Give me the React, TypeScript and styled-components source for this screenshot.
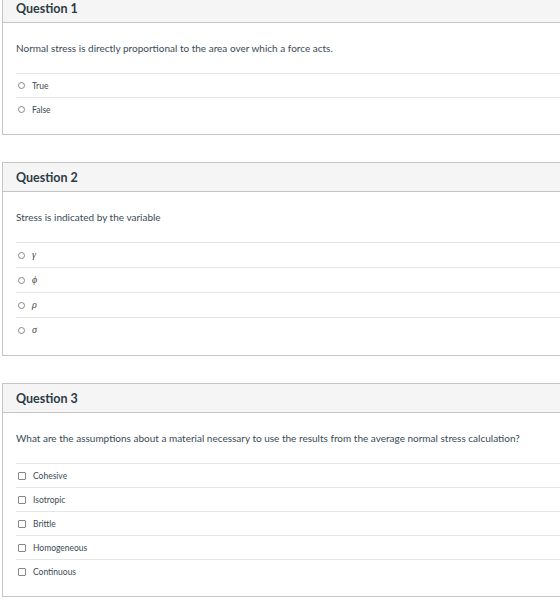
import styled, { createGlobalStyle } from "styled-components";

const GlobalStyle = createGlobalStyle`
  html, body {
    margin: 0;
    padding: 0;
    background: #ffffff;
    overflow: hidden;
  }
  body {
    font-family: Lato, "Noto Sans", sans-serif;
    color: #2d3b45;
  }
`;

const Page = styled.div`
  display: flex;
  flex-direction: column;
  gap: 27px;
  width: 620px;
  margin: -7px 0 0 2px;
`;

const Card = styled.section`
  border: 1px solid #c4c4c4;
  background: #ffffff;
`;

const Header = styled.header`
  height: 28px;
  display: flex;
  align-items: center;
  padding: 0 13px;
  background: #f5f5f5;
  border-bottom: 1px solid #c4c4c4;
  font-size: 12.5px;
  font-weight: 700;
  color: #2d3b45;
`;

const Body = styled.div`
  padding: 0 0 13px 13px;
`;

const Prompt = styled.p`
  margin: 0;
  height: 50px;
  display: flex;
  align-items: center;
  font-size: 10px;
  line-height: 12px;
  color: #3a4a56;
`;

const Option = styled.label<{ $tall?: boolean }>`
  display: flex;
  align-items: center;
  gap: 7px;
  height: ${(p) => (p.$tall ? 24 : 23)}px;
  padding-left: 2px;
  border-top: 1px solid #e6e6e6;
  font-size: 8.5px;
  line-height: 10px;
  color: #3b4a55;
`;

const Radio = styled.span`
  width: 5px;
  height: 5px;
  border: 1px solid #888888;
  border-radius: 50%;
  flex-shrink: 0;
`;

const Box = styled.span`
  width: 6px;
  height: 6px;
  border: 1px solid #888888;
  border-radius: 1px;
  flex-shrink: 0;
`;

const Greek = styled.span`
  font-family: "Liberation Serif", "DejaVu Serif", serif;
  font-style: italic;
  font-size: 10px;
  line-height: 10px;
  color: #444444;
`;

type Question = {
  title: string;
  prompt: string;
  kind: "radio" | "check";
  options: string[];
  math?: boolean;
};

const questions: Question[] = [
  {
    title: "Question 1",
    prompt:
      "Normal stress is directly proportional to the area over which a force acts.",
    kind: "radio",
    options: ["True", "False"],
  },
  {
    title: "Question 2",
    prompt: "Stress is indicated by the variable",
    kind: "radio",
    options: ["γ", "ϕ", "ρ", "σ"],
    math: true,
  },
  {
    title: "Question 3",
    prompt:
      "What are the assumptions about a material necessary to use the results from the average normal stress calculation?",
    kind: "check",
    options: ["Cohesive", "Isotropic", "Brittle", "Homogeneous", "Continuous"],
  },
];

export default function App() {
  return (
    <>
      <GlobalStyle />
      <Page>
        {questions.map((q) => (
          <Card key={q.title}>
            <Header>{q.title}</Header>
            <Body>
              <Prompt>{q.prompt}</Prompt>
              {q.options.map((o) => (
                <Option key={o} $tall={q.math}>
                  {q.kind === "radio" ? <Radio /> : <Box />}
                  {q.math ? <Greek>{o}</Greek> : o}
                </Option>
              ))}
            </Body>
          </Card>
        ))}
      </Page>
    </>
  );
}
